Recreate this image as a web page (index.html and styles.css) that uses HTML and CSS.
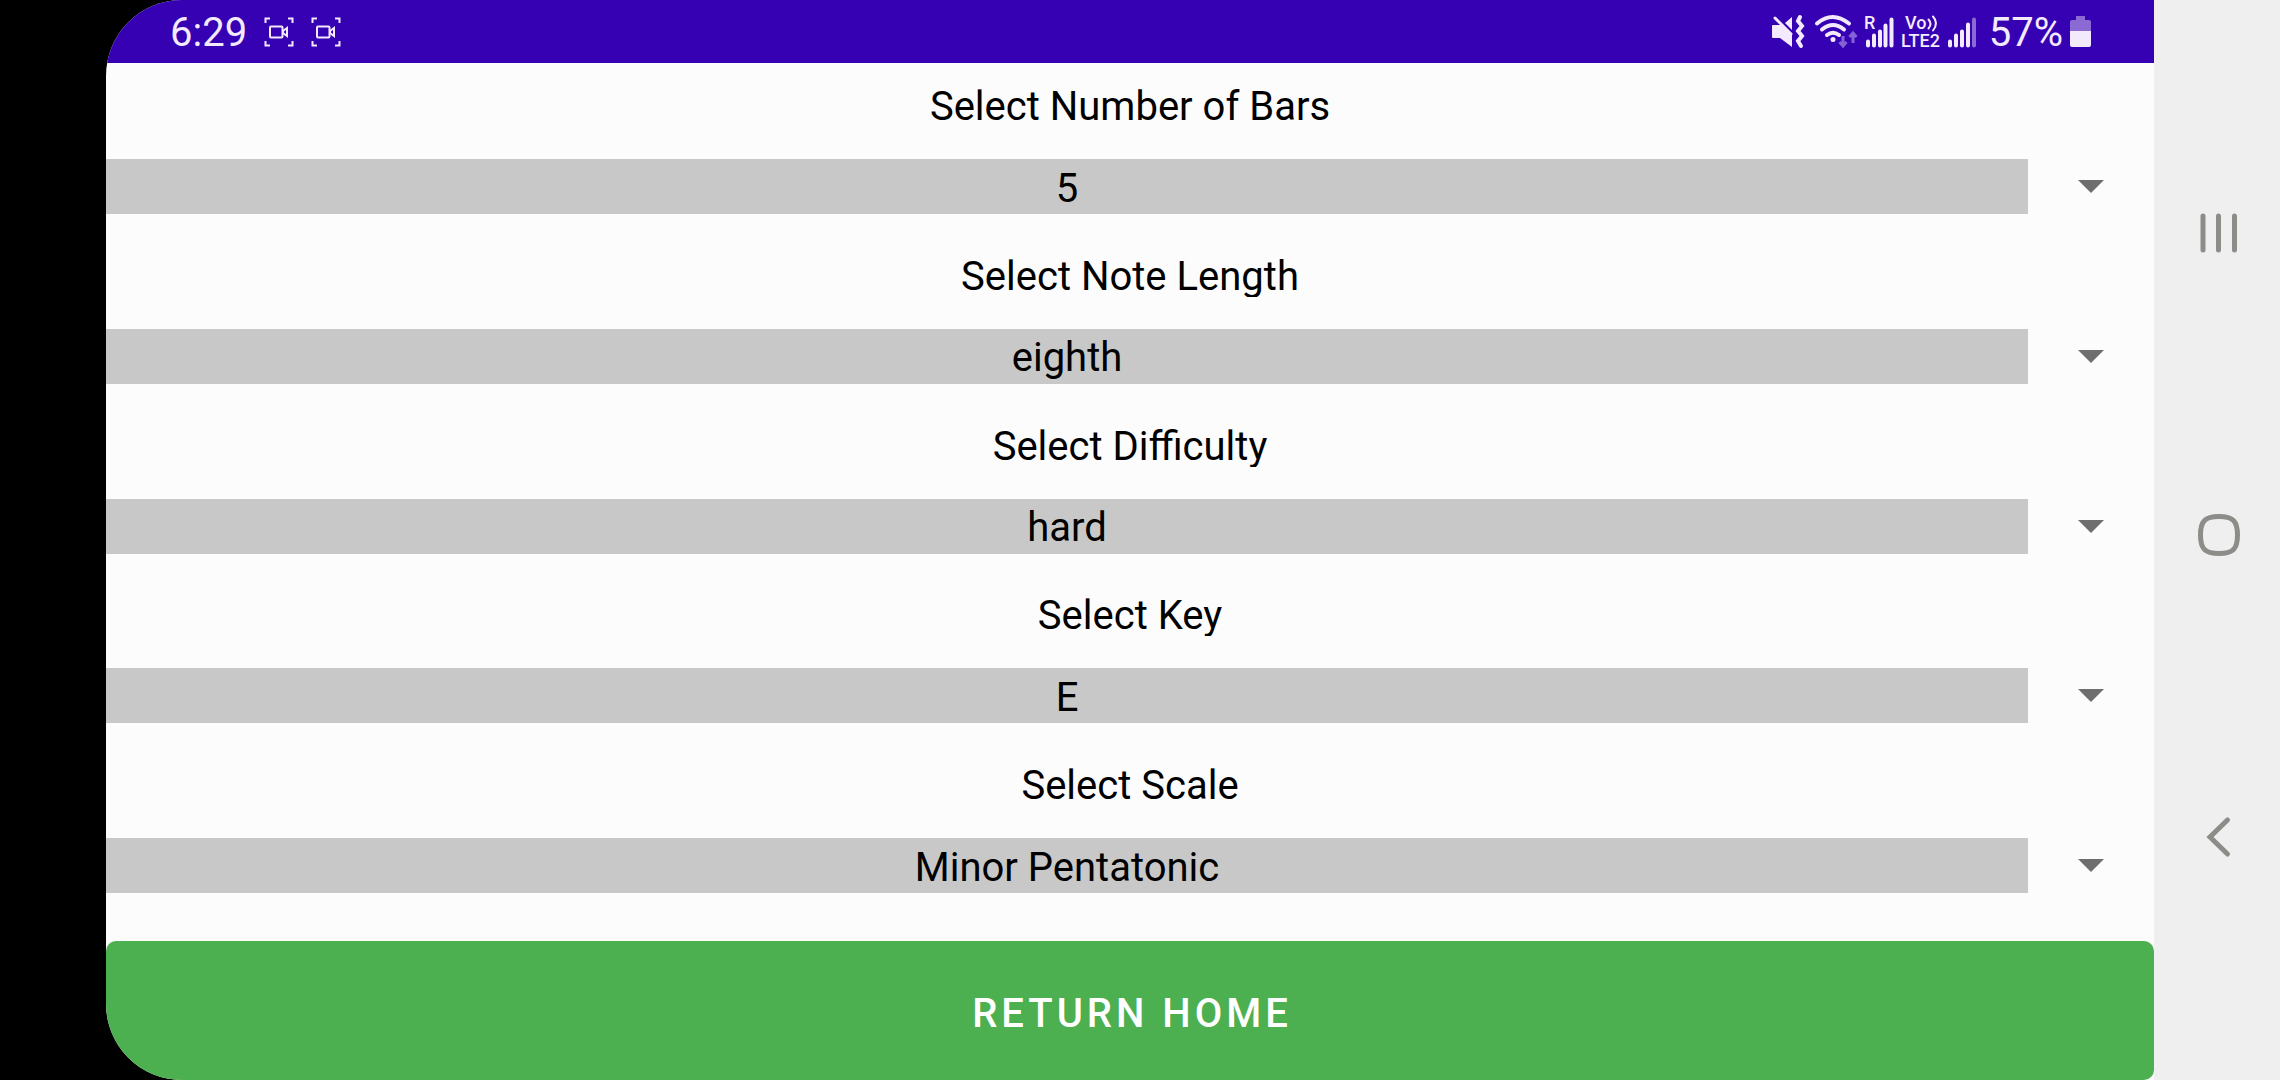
FILE: index.html
```html
<!DOCTYPE html>
<html lang="en">
<head>
<meta charset="utf-8">
<meta name="viewport" content="width=device-width, initial-scale=1">
<title>Practice settings</title>
<link rel="stylesheet" href="styles.css">
</head>
<body>
<div class="device">
  <div class="screen">
    <header class="status">
      <div class="status-left">
        <span class="status-text">6:29</span>
        <svg class="capture" width="30" height="30" viewBox="0 0 30 30" aria-hidden="true"><path d="M1.500 6V1.500H6M24 1.500h4.500V6M28.500 24v4.500H24M6 28.500H1.500V24"/><rect x="6" y="9.500" width="12.500" height="11" rx="1"/><path d="M19 14l4-3v8l-4-3z"/></svg>
        <svg class="capture" width="30" height="30" viewBox="0 0 30 30" aria-hidden="true"><path d="M1.500 6V1.500H6M24 1.500h4.500V6M28.500 24v4.500H24M6 28.500H1.500V24"/><rect x="6" y="9.500" width="12.500" height="11" rx="1"/><path d="M19 14l4-3v8l-4-3z"/></svg>
      </div>
      <div class="status-right">
        <svg width="36" height="34" viewBox="0 0 36 34" aria-hidden="true">
          <path class="solid" d="M0 11q0-1 1-1h8l11 10v12L8 23H1q-1 0-1-1zM13 8l7-6v13z"/>
          <path class="line" d="M3 3l16 16" />
          <path class="line heavy" d="M28 2l-2 4 4 5-4 5 4 5-4 5 3 5"/>
        </svg>
        <svg width="42" height="34" viewBox="0 0 42 34" aria-hidden="true">
          <path class="line heavy" d="M2 8.500q15.500-13 32 0M7 14.500q11-9 22 0M12 20q6-4.500 12 0"/>
          <circle class="solid" cx="18" cy="24.500" r="2.500"/>
          <path class="faint-line" d="M28 21v10M24.500 27l3.500 4 3.500-4M38 28V18M34.500 22l3.500-4 3.500 4"/>
        </svg>
        <svg width="30" height="34" viewBox="0 0 30 34" aria-hidden="true">
          <text x="0" y="14">R</text>
          <path class="bars" d="M4 30.500v-4M10 30.500v-10M16 30.500v-14M21.500 30.500v-20M27.500 30.500V4.500"/>
        </svg>
        <svg width="40" height="34" viewBox="0 0 40 34" aria-hidden="true">
          <text x="4" y="14">Vo</text>
          <path class="thin" d="M27.500 4.500q4 4.500 0 9M32 1.500q6 6.500 0 14"/>
          <text x="0" y="32">LTE2</text>
        </svg>
        <svg width="34" height="34" viewBox="0 0 34 34" aria-hidden="true">
          <path class="bars" d="M2 30.500v-4M8 30.500v-10M14 30.500v-14M20 30.500V9.500"/>
          <path class="bars faint" d="M26 30.500V4.500"/>
        </svg>
        <span class="status-text">57%</span>
        <svg class="battery" width="21" height="34" viewBox="0 0 21 34" aria-hidden="true">
          <path class="solid faint" d="M6 1h9v4h4q2 0 2 2v9H0V7q0-2 2-2h4z"/>
          <path class="solid" d="M0 16h21v14q0 2-2 2H2q-2 0-2-2z"/>
        </svg>
      </div>
    </header>

    <main class="settings">
      <div class="field">
        <label class="field-label" for="bars">Select Number of Bars</label>
        <div class="spinner">
          <select id="bars"><option>5</option></select>
          <svg class="caret" width="26" height="13" viewBox="0 0 26 13" aria-hidden="true"><path d="M0 0h26L13 13z"/></svg>
        </div>
      </div>
      <div class="field">
        <label class="field-label" for="length">Select Note Length</label>
        <div class="spinner">
          <select id="length"><option>eighth</option></select>
          <svg class="caret" width="26" height="13" viewBox="0 0 26 13" aria-hidden="true"><path d="M0 0h26L13 13z"/></svg>
        </div>
      </div>
      <div class="field">
        <label class="field-label" for="difficulty">Select Difficulty</label>
        <div class="spinner">
          <select id="difficulty"><option>hard</option></select>
          <svg class="caret" width="26" height="13" viewBox="0 0 26 13" aria-hidden="true"><path d="M0 0h26L13 13z"/></svg>
        </div>
      </div>
      <div class="field">
        <label class="field-label" for="key">Select Key</label>
        <div class="spinner">
          <select id="key"><option>E</option></select>
          <svg class="caret" width="26" height="13" viewBox="0 0 26 13" aria-hidden="true"><path d="M0 0h26L13 13z"/></svg>
        </div>
      </div>
      <div class="field">
        <label class="field-label" for="scale">Select Scale</label>
        <div class="spinner">
          <select id="scale"><option>Minor Pentatonic</option></select>
          <svg class="caret" width="26" height="13" viewBox="0 0 26 13" aria-hidden="true"><path d="M0 0h26L13 13z"/></svg>
        </div>
      </div>
    </main>

    <button class="home-button" type="button">RETURN HOME</button>
  </div>

  <nav class="navbar" aria-label="System navigation">
    <button type="button" aria-label="Recent apps"><svg width="44" height="44" viewBox="0 0 44 44"><path d="M6 5v34M21.500 5v34M37.500 5v34"/></svg></button>
    <button type="button" aria-label="Home"><svg width="44" height="44" viewBox="0 0 44 44"><path d="M22 3.500C36 3.500 40.500 8 40.500 22S36 40.500 22 40.500 3.500 36 3.500 22 8 3.500 22 3.500z"/></svg></button>
    <button type="button" aria-label="Back"><svg width="44" height="44" viewBox="0 0 44 44"><path d="M30.500 5L13 22l17.500 17"/></svg></button>
  </nav>
</div>
</body>
</html>
```
FILE: styles.css
```css
* {
  box-sizing: border-box;
}

body {
  margin: 0;
  background: #000;
  color: #000;
  font-family: Roboto, sans-serif;
}

button,
select {
  margin: 0;
  border: 0;
  color: inherit;
  font: inherit;
}

.device {
  display: grid;
  grid-template-columns: 1fr 126px;
  min-height: 100vh;
  padding-left: 106px;
}

.screen {
  display: flex;
  flex-direction: column;
  overflow: hidden;
  border-radius: 76px 0 0 76px;
  background: #fcfcfd;
}

/* Status bar */
.status {
  display: flex;
  justify-content: space-between;
  height: 63px;
  padding: 0 63px 0 64px;
  background: #3600b3;
  color: #f4eafd;
}

.status-left,
.status-right {
  display: flex;
  align-items: center;
}

.status-left {
  gap: 17px;
}

.status-right {
  gap: 7px;
}

.status-text {
  padding-top: 3px;
  font-size: 40px;
  line-height: 48px;
}

.status svg {
  overflow: visible;
  fill: none;
  stroke-width: 3;
}

.status .capture {
  stroke: #f4eafd;
  stroke-width: 2;
}

.status text {
  fill: #f4eafd;
  font-size: 18px;
  font-weight: 500;
}

.status .solid {
  fill: #f4eafd;
}

.line,
.thin,
.bars {
  stroke: #f4eafd;
  stroke-linecap: round;
}

.thin {
  stroke-width: 2;
}

.heavy,
.bars {
  stroke-width: 4;
}

.faint-line {
  stroke: #8462d6;
}

.faint {
  opacity: 0.45;
}

/* Settings */
.settings {
  display: flex;
  flex: 1;
  flex-direction: column;
  padding-bottom: 29px;
  font-size: 40px;
}

.field {
  display: flex;
  flex: 1;
  flex-direction: column;
  gap: 32px;
}

.field-label {
  height: 64px;
  padding-top: 20px;
  overflow: hidden;
  line-height: 48px;
  text-align: center;
}

.spinner {
  display: grid;
  grid-template-columns: 1fr 126px;
  align-items: center;
}

.spinner select {
  grid-area: 1 / 1 / 2 / 3;
  width: 100%;
  height: 55px;
  padding: 4px 126px 0 0;
  border-radius: 0;
  appearance: none;
  background: linear-gradient(#c8c8c8, #c8c8c8) no-repeat 0 0 / calc(100% - 126px) 100%;
  line-height: 48px;
  text-align: center;
  text-align-last: center;
}

.caret {
  grid-area: 1 / 2;
  justify-self: center;
  fill: #6e6e6e;
  pointer-events: none;
}

.home-button {
  height: 139px;
  padding: 5px 0 0 4px;
  border-radius: 10px;
  background: #4caf50;
  color: #fff;
  font-size: 40px;
  font-weight: 500;
  letter-spacing: 4px;
}

/* System navigation */
.navbar {
  display: flex;
  flex-direction: column;
  justify-content: space-between;
  padding: 82px 0 92px 3px;
  background: #efeff0;
}

.navbar button {
  display: grid;
  place-items: center;
  height: 302px;
  padding: 0;
  background: none;
}

.navbar svg {
  fill: none;
  stroke: #8c8c88;
  stroke-linecap: round;
  stroke-width: 5;
}
```
